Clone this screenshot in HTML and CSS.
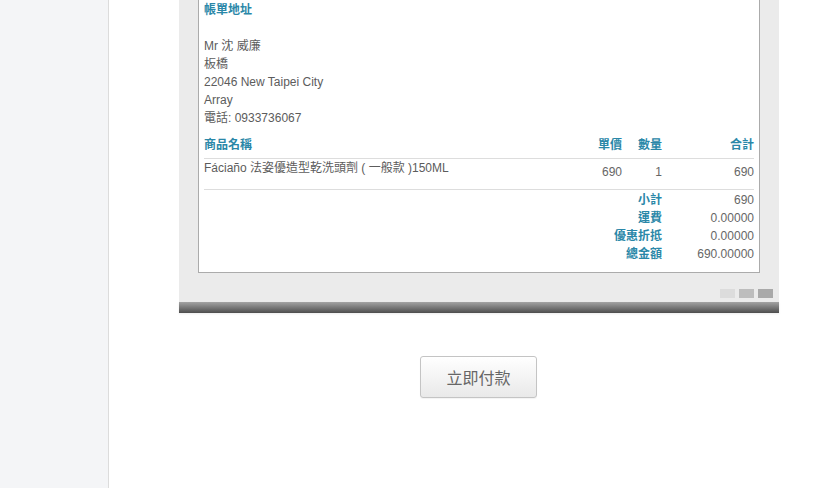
FILE: index.html
```html
<!DOCTYPE html>
<html lang="zh-Hant">
<head>
    <meta charset="UTF-8">
    <meta name="viewport" content="width=device-width, initial-scale=1.0">
    <title>確認訂單</title>
    <link rel="stylesheet" href="styles.css">
</head>
<body>
    <div class="sidebar"></div>
    <div class="main">
        <div class="order-frame">
            <div class="order-sheet">
                <h3 class="section-title">帳單地址</h3>
                <div class="address">
                    <p>Mr 沈 威廉</p>
                    <p>板橋</p>
                    <p>22046 New Taipei City</p>
                    <p>Array</p>
                    <p>電話: 0933736067</p>
                </div>
                <table class="items">
                    <colgroup>
                        <col>
                        <col class="col-price">
                        <col class="col-qty">
                        <col class="col-total">
                    </colgroup>
                    <thead>
                        <tr>
                            <th class="name">商品名稱</th>
                            <th>單價</th>
                            <th>數量</th>
                            <th>合計</th>
                        </tr>
                    </thead>
                    <tbody>
                        <tr class="item-row">
                            <td class="name">Fáciaño 法姿優造型乾洗頭劑 ( 一般款 )150ML</td>
                            <td>690</td>
                            <td>1</td>
                            <td>690</td>
                        </tr>
                    </tbody>
                    <tfoot>
                        <tr class="first"><th colspan="3">小計</th><td>690</td></tr>
                        <tr><th colspan="3">運費</th><td>0.00000</td></tr>
                        <tr><th colspan="3">優惠折抵</th><td>0.00000</td></tr>
                        <tr><th colspan="3">總金額</th><td>690.00000</td></tr>
                    </tfoot>
                </table>
            </div>
            <div class="pager">
                <span class="dot"></span>
                <span class="dot mid"></span>
                <span class="dot dark"></span>
            </div>
            <div class="frame-bar"></div>
        </div>
        <div class="actions">
            <button class="pay-btn" type="button">立即付款</button>
        </div>
    </div>
</body>
</html>
```

FILE: styles.css
```css
html, body {
    margin: 0;
    height: 100%;
}
body {
    display: flex;
    overflow: hidden;
    font-family: "Liberation Sans", Arial, "Noto Sans CJK TC", sans-serif;
    font-size: 12px;
    line-height: 18px;
    color: #5c5c5c;
    background-color: #fff;
}
.sidebar {
    width: 108px;
    flex-shrink: 0;
    background-color: #f4f5f7;
    border-right: 1px solid #dcdcdc;
}
.main {
    flex: 1;
}
.order-frame {
    width: 600px;
    margin-left: 70px;
    background-color: #ebebeb;
}
.order-sheet {
    margin: 0 19px;
    padding: 1px 5px 9px;
    background-color: #fff;
    border: 1px solid #ababab;
    border-top: none;
}
.section-title {
    margin: 0;
    font-size: 12px;
    font-weight: bold;
    color: #2a87a8;
}
.address {
    margin-top: 18px;
}
.address p {
    margin: 0;
}
.items {
    width: 100%;
    margin-top: 9px;
    border-collapse: collapse;
    table-layout: fixed;
}
.col-price { width: 60px; }
.col-qty { width: 40px; }
.col-total { width: 92px; }
.items th,
.items td {
    padding: 0;
    text-align: right;
    font-weight: normal;
}
.items th {
    font-weight: bold;
    color: #2a87a8;
}
.items .name {
    text-align: left;
}
.items thead th {
    padding-bottom: 4px;
    border-bottom: 1px solid #dddddd;
}
.item-row td {
    height: 26px;
    padding-top: 4px;
    vertical-align: top;
    color: #666;
    border-bottom: 1px solid #dddddd;
}
.item-row td.name {
    padding-top: 0;
    height: 30px;
    color: #5c5c5c;
}
.items tfoot td {
    color: #666;
}
.items tfoot tr.first th,
.items tfoot tr.first td {
    padding-top: 1px;
}
.pager {
    display: flex;
    justify-content: flex-end;
    gap: 4px;
    padding: 16px 6px 4px 0;
}
.dot {
    width: 15px;
    height: 9px;
    background-color: #dcdcdc;
}
.dot.mid {
    background-color: #bdbdbd;
}
.dot.dark {
    background-color: #a9a9a9;
}
.frame-bar {
    height: 11px;
    background: linear-gradient(#a3a3a3, #4d4d4d);
    box-shadow: 0 1px 2px rgba(0, 0, 0, 0.08);
}
.actions {
    width: 600px;
    margin-left: 70px;
    padding-top: 43px;
    display: flex;
    justify-content: center;
}
.pay-btn {
    width: 117px;
    height: 42px;
    margin-right: 1px;
    font-family: "Liberation Sans", Arial, "Noto Sans CJK TC", sans-serif;
    font-size: 16px;
    color: #666;
    background: linear-gradient(#ffffff, #e9e9e9);
    border: 1px solid #c4c4c4;
    border-radius: 3px;
    box-shadow: 0 1px 1px rgba(0, 0, 0, 0.05);
    cursor: pointer;
}
```
